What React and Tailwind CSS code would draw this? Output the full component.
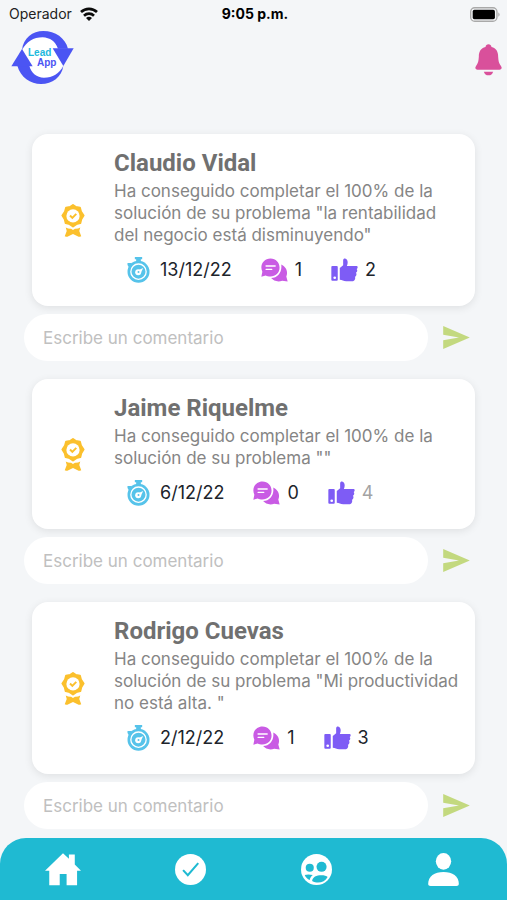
import React, { useState } from 'react';

const posts = [
  {
    id: 1,
    name: 'Claudio Vidal',
    text: 'Ha conseguido completar el 100% de la solución de su problema "la rentabilidad del negocio está disminuyendo"',
    date: '13/12/22',
    comments: 1,
    likes: 2,
    liked: true
  },
  {
    id: 2,
    name: 'Jaime Riquelme',
    text: 'Ha conseguido completar el 100% de la solución de su problema ""',
    date: '6/12/22',
    comments: 0,
    likes: 4,
    liked: false
  },
  {
    id: 3,
    name: 'Rodrigo Cuevas',
    text: 'Ha conseguido completar el 100% de la solución de su problema "Mi productividad no está alta. "',
    date: '2/12/22',
    comments: 1,
    likes: 3,
    liked: true
  }
];

const WifiIcon = () => (
  <svg viewBox="0 0 54 42" className="w-[18px] h-[14px]" aria-hidden="true">
    <g fill="none" stroke="#0b0b0b" strokeWidth="8">
      <path d="M3 15 A35 35 0 0 1 51 15" />
      <path d="M12 26 A22 22 0 0 1 42 26" />
    </g>
    <path d="M27 42 L18 33 A14 14 0 0 1 36 33 Z" fill="#0b0b0b" />
  </svg>
);

const BatteryIcon = () => (
  <svg viewBox="0 0 92 44" className="w-[31px] h-[15px]" aria-hidden="true">
    <rect x="2" y="2" width="78" height="40" rx="12" fill="#f4f6f8" stroke="#a9a9a9" strokeWidth="4" />
    <rect x="8" y="8" width="66" height="28" rx="5" fill="#000" />
    <path d="M84 15 Q92 22 84 29 Z" fill="#a9a9a9" />
  </svg>
);

const Logo = () => (
  <svg viewBox="30 90 195 165" className="w-[65px] h-[55px]" role="img" aria-label="Lead App">
    <circle cx="128" cy="172" r="64" fill="#fff" />
    <g fill="#4b55f3">
      <path d="M66 150 C70 114 98 93 130 93 C166 93 196 114 204 146 L174 146 C166 124 150 113 128 112 C100 112 80 125 66 150 Z" />
      <path d="M158 145 H221 L190 198 Z" />
      <path d="M190 198 C185 231 157 252 123 252 C91 252 62 232 52 197 L88 197 C94 220 110 232 132 233 C158 233 178 221 190 198 Z" />
      <path d="M66 147 L98 199 H34 Z" />
    </g>
    <g fontFamily="Liberation Sans, sans-serif" fontWeight="700" fontSize="30">
      <text x="84" y="167" fill="#1db9dd">Lead</text>
      <text x="111" y="198" fill="#4b55f3">App</text>
    </g>
  </svg>
);

const BellIcon = () => (
  <svg viewBox="226 133 80 96" className="w-[27px] h-[32px]" fill="#d9509b" aria-hidden="true">
    <path d="M266 134 C261 134 258 137 257 142 C243 145 237 156 237 171 C236 185 235 189 229 198 C224 205 227 210 233 210 H299 C305 210 308 205 303 198 C297 189 296 185 295 171 C295 156 289 145 275 142 C274 137 271 134 266 134 Z" />
    <path d="M252 216 H280 C278 223 273 227 266 227 C259 227 254 223 252 216 Z" />
  </svg>
);

const AwardIcon = () => (
  <svg viewBox="0 0 72 100" className="w-[24px] h-[33px]" aria-hidden="true">
    <path
      d="M36 3 L45 9 L57 11 L60 23 L68 35 L61 46 L58 58 L46 61 L36 68 L26 61 L14 58 L11 46 L4 35 L12 23 L15 11 L27 9 Z"
      fill="#fbc02d"
      stroke="#fbc02d"
      strokeWidth="6"
      strokeLinejoin="round"
    />
    <path d="M14 71 Q23 76 30 75 L36 79 L42 75 Q50 76 58 71 L55 82 L61 98 Q59 100 53 99 L36 91 L19 99 Q13 100 11 98 L17 82 Z" fill="#fbc02d" />
    <circle cx="36" cy="36" r="20" fill="#fff" />
    <path d="M27 35 L34 42 L46 30" fill="none" stroke="#fbc02d" strokeWidth="6" />
  </svg>
);

const StopwatchIcon = () => (
  <svg viewBox="0 0 68 78" className="w-[23px] h-[26px]" aria-hidden="true">
    <g fill="#56c3ea">
      <path d="M23 0 H45 V7 H41 V14 H27 V7 H23 Z" />
      <path d="M1 24 V18 H12 L18 21 L6 32 Z" />
      <circle cx="34" cy="44" r="33" />
    </g>
    <circle cx="34" cy="44" r="23" fill="none" stroke="#fff" strokeWidth="4" />
    <circle cx="33" cy="46" r="9" fill="#fff" />
    <path d="M33 40 L48 33 L41 48 Z" fill="#fff" />
    <circle cx="34" cy="45" r="3" fill="#56c3ea" />
  </svg>
);

const CommentsIcon = () => (
  <svg viewBox="29 22 80 70" className="w-[27px] h-[24px]" aria-hidden="true">
    <path d="M89 41 C103 47 110 62 104 76 L108 91 L92 89 C78 94 66 89 59 81 C79 80 92 63 89 41 Z" fill="#c95be4" />
    <path d="M57 23 C73 23 84 35 84 50 C84 65 72 76 57 76 C51 76 47 75 43 73 L30 77 L33 62 C24 43 37 23 57 23 Z" fill="#c95be4" />
    <path d="M44 45 H71 M44 55 H61" stroke="#fff" strokeWidth="4" strokeLinecap="round" />
  </svg>
);

const ThumbIcon = () => (
  <svg viewBox="244 22 80 70" className="w-[27px] h-[24px]" aria-hidden="true">
    <rect x="245" y="45" width="19" height="44" rx="3" fill="#7e5cf5" />
    <circle cx="255" cy="80" r="4" fill="#fff" />
    <path d="M270 51 L280 43 V29 C280 21 291 21 293 31 C294 36 293 41 291 45 H320 C324 45 324 53 320 54 C323 57 322 64 318 65 C321 69 319 76 315 77 C317 82 315 89 309 90 H289 C281 90 277 87 270 86 Z" fill="#7e5cf5" />
  </svg>
);

const SendIcon = () => (
  <svg viewBox="0 0 81 70" className="w-[27px] h-[23px]" fill="#c3d97f" aria-hidden="true">
    <path d="M0 0 L81 35 L0 70 V43 L48 35 L0 27 Z" />
  </svg>
);

const HomeIcon = () => (
  <svg viewBox="138 69 110 99" className="w-[36px] h-[33px]" fill="#fff" aria-hidden="true">
    <path d="M193 69 L211 86 V73 H229 V103 L248 122 H236 V167 H204 V132 H183 V167 H151 V122 H138 Z" />
  </svg>
);

const CheckIcon = () => (
  <svg viewBox="0 0 92 92" className="w-[31px] h-[31px]" aria-hidden="true">
    <circle cx="46" cy="46" r="46" fill="#fff" />
    <path d="M24 48 L38 63 L69 27" fill="none" stroke="#1fbad2" strokeWidth="6" />
  </svg>
);

const GroupIcon = () => (
  <svg viewBox="0 0 92 92" className="w-[31px] h-[31px]" aria-hidden="true">
    <circle cx="46" cy="46" r="46" fill="#fff" />
    <g fill="#1fbad2">
      <circle cx="26" cy="41" r="12" />
      <circle cx="61" cy="38" r="15" />
      <path d="M11 62 C17 60 26 60 35 62 C30 66 27 70 26 77 C19 74 14 69 11 62 Z" />
      <path d="M33 80 C34 68 46 63 60 63 C69 63 76 65 79 68 C70 85 49 89 33 80 Z" />
    </g>
  </svg>
);

const UserIcon = () => (
  <svg viewBox="0 0 92 99" className="w-[31px] h-[33px]" fill="#fff" aria-hidden="true">
    <ellipse cx="46" cy="25" rx="23" ry="25" />
    <path d="M0 93 C0 69 19 57 46 57 C73 57 92 69 92 93 C92 97 89 99 85 99 H7 C3 99 0 97 0 93 Z" />
  </svg>
);

const PostCard = ({ post }) => (
  <article className="mx-8 flex rounded-2xl bg-white shadow-[0_2px_8px_rgba(0,0,0,0.09)]">
    <div className="flex w-[82px] shrink-0 items-center justify-center">
      <AwardIcon />
    </div>
    <div className="flex-1 pt-[15px] pr-4 pb-[22px]">
      <h2 className="font-[Roboto,sans-serif] text-2xl leading-7 font-bold text-[#707070]">{post.name}</h2>
      <p className="mt-[3px] text-[17px] leading-[22px] text-[#858585]">{post.text}</p>
      <div className="mt-[10px] ml-[13px] flex h-7 items-center gap-[29px] text-lg text-[#20242b]">
        <span className="flex items-center gap-[10px]">
          <StopwatchIcon />
          {post.date}
        </span>
        <button type="button" aria-label={`Comentarios: ${post.comments}`} className="flex items-center gap-[7px]">
          <CommentsIcon />
          {post.comments}
        </button>
        <button
          type="button"
          aria-label={`Me gusta: ${post.likes}`}
          className={post.liked ? 'flex items-center gap-[7px]' : 'flex items-center gap-[7px] text-[#a3a3a3]'}
        >
          <ThumbIcon />
          {post.likes}
        </button>
      </div>
    </div>
  </article>
);

const CommentForm = ({ id }) => {
  const [comment, setComment] = useState('');

  const handleSubmit = (e) => {
    e.preventDefault();
    setComment('');
  };

  return (
    <form onSubmit={handleSubmit} className="mt-2 mb-[18px] flex items-center gap-[15px] pl-6 pr-[37px]">
      <input
        id={`comment-${id}`}
        type="text"
        aria-label="Escribe un comentario"
        placeholder="Escribe un comentario"
        value={comment}
        onChange={(e) => setComment(e.target.value)}
        className="h-[47px] min-w-0 flex-1 rounded-full bg-white px-[19px] text-[17px] text-[#20242b] outline-none placeholder:text-[#c0c0c0]"
      />
      <button type="submit" aria-label="Enviar">
        <SendIcon />
      </button>
    </form>
  );
};

const tabs = [
  { label: 'Inicio', href: '#inicio', Icon: HomeIcon },
  { label: 'Tareas', href: '#tareas', Icon: CheckIcon },
  { label: 'Grupo', href: '#grupo', Icon: GroupIcon },
  { label: 'Perfil', href: '#perfil', Icon: UserIcon }
];

const App = () => {
  return (
    <div className="flex min-h-screen flex-col bg-[#f4f6f8] font-[Inter,sans-serif]">
      {/* Status bar */}
      <div className="grid h-7 grid-cols-3 items-center pl-[9px] pr-[6px] text-sm text-[#222]">
        <div className="flex items-center gap-2">
          Operador
          <WifiIcon />
        </div>
        <span className="text-center font-bold text-black">9:05 p.m.</span>
        <div className="flex justify-end">
          <BatteryIcon />
        </div>
      </div>

      {/* Header */}
      <header className="mt-[2px] mb-[49px] flex items-center justify-between pl-[10px] pr-[5px]">
        <Logo />
        <button type="button" aria-label="Notificaciones" className="pt-1">
          <BellIcon />
        </button>
      </header>

      {/* Feed */}
      <main className="flex-1">
        {posts.map((post) => (
          <section key={post.id}>
            <PostCard post={post} />
            <CommentForm id={post.id} />
          </section>
        ))}
      </main>

      {/* Bottom tabs */}
      <nav className="sticky bottom-0 -mt-[10px] flex h-[62px] items-center rounded-t-[26px] bg-[#1fbad2]">
        {tabs.map(({ label, href, Icon }) => (
          <a key={label} href={href} aria-label={label} className="flex flex-1 justify-center">
            <Icon />
          </a>
        ))}
      </nav>
    </div>
  );
};

export default App;
